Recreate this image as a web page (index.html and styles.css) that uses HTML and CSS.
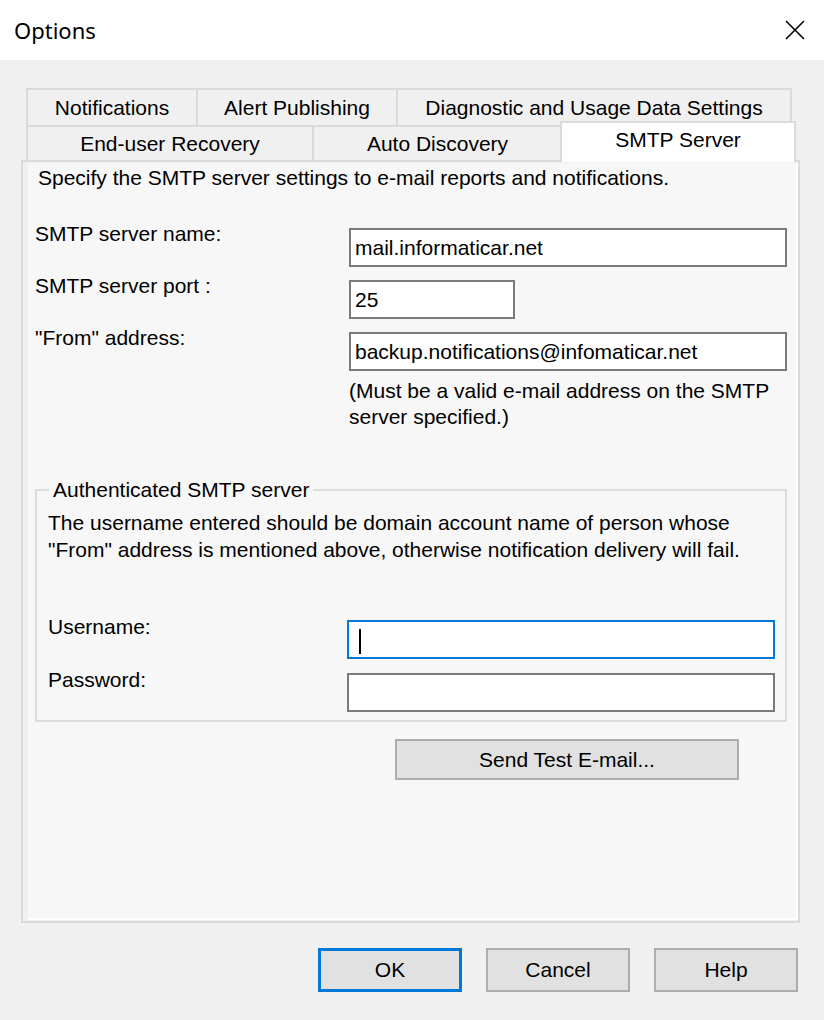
FILE: index.html
```html
<!DOCTYPE html>
<html>
<head>
<meta charset="utf-8">
<title>Options</title>
<link rel="stylesheet" href="styles.css">
</head>
<body>
<div class="titlebar">
  <span class="title">Options</span>
  <svg class="close" viewBox="0 0 20 20" width="20" height="20"><path d="M1 1L19 19M19 1L1 19" stroke="#000" stroke-width="1.6" fill="none"/></svg>
</div>
<div class="client">
  <div class="tabs">
    <div class="tabrow back">
      <div class="tab t-notif">Notifications</div>
      <div class="tab t-alert">Alert Publishing</div>
      <div class="tab t-diag">Diagnostic and Usage Data Settings</div>
    </div>
    <div class="tabrow front">
      <div class="tab t-end">End-user Recovery</div>
      <div class="tab t-auto">Auto Discovery</div>
      <div class="tab t-smtp selected">SMTP Server</div>
    </div>
  </div>
  <div class="panel">
    <div class="page">
      <div class="intro">Specify the SMTP server settings to e-mail reports and notifications.</div>
      <div class="form">
        <div class="label">SMTP server name:</div>
        <div class="tb wide">mail.informaticar.net</div>
        <div class="label">SMTP server port :</div>
        <div class="tb port">25</div>
        <div class="label">"From" address:</div>
        <div class="tb wide">backup.notifications@infomaticar.net</div>
        <div class="note">(Must be a valid e-mail address on the SMTP<br>server specified.)</div>
      </div>
      <fieldset class="group">
        <legend>Authenticated SMTP server</legend>
        <div class="group-text">The username entered should be domain account name of person whose<br>"From" address is mentioned above, otherwise notification delivery will fail.</div>
        <div class="auth">
          <div class="label">Username:</div>
          <div class="tb auth-tb focus"><span class="caret"></span></div>
          <div class="label">Password:</div>
          <div class="tb auth-tb"></div>
        </div>
      </fieldset>
      <div class="btn send">Send Test E-mail...</div>
    </div>
  </div>
  <div class="actions">
    <div class="btn act default">OK</div>
    <div class="btn act">Cancel</div>
    <div class="btn act">Help</div>
  </div>
</div>
</body>
</html>
```
FILE: styles.css
```css
* { box-sizing: border-box; }
html, body { margin: 0; padding: 0; }
body {
  width: 824px;
  height: 1020px;
  overflow: hidden;
  background: #f0f0f0;
  font-family: "Liberation Sans", Arial, sans-serif;
  font-size: 21px;
  color: #000;
}
.titlebar {
  height: 60px;
  background: #fff;
  display: flex;
  align-items: center;
  justify-content: space-between;
  padding: 0 19px 0 14px;
}
.title {
  font-family: "Noto Sans", "Open Sans", sans-serif;
  font-size: 22px;
}
.close { display: block; }
.client { padding-top: 28px; }
.tabs { margin-left: 26px; }
.tabrow { display: flex; align-items: flex-end; }
.tab {
  border: 2px solid #dadada;
  border-bottom: none;
  background: #f0f0f0;
  text-align: center;
  white-space: nowrap;
  margin-right: -2px;
}
.back .tab { height: 37px; line-height: 35px; }
.front { margin-top: -4px; }
.front .tab { height: 35px; line-height: 33px; }
.front .tab.selected {
  position: relative;
  z-index: 2;
  height: 41px;
  margin-bottom: -2px;
  margin-left: -1px;
  background: #fff;
  line-height: 34px;
  padding-bottom: 5px;
}
.t-notif { width: 172px; }
.t-alert { width: 202px; }
.t-diag { width: 396px; }
.t-end { width: 288px; }
.t-auto { width: 251px; }
.t-smtp { width: 236px; }
.panel {
  margin-left: 21px;
  width: 779px;
  height: 763px;
  border: 2px solid #dadada;
  background: #f0f0f0;
  padding: 1px 0 1px 5px;
}
.page {
  height: 100%;
  background: #f7f7f7;
  border-right: 2px solid #fff;
  border-bottom: 2px solid #fff;
  padding-top: 2px;
}
.intro { padding-left: 10px; line-height: 26px; }
.form {
  display: grid;
  grid-template-columns: 314px auto;
  row-gap: 13px;
  margin-top: 37px;
  padding-left: 7px;
  align-items: start;
}
.label { line-height: 26px; margin-top: -7px; white-space: nowrap; }
.tb {
  height: 39px;
  border: 2px solid #7a7a7a;
  background: #fff;
  padding: 0 4px;
  line-height: 35px;
  white-space: nowrap;
}
.tb.wide { width: 438px; }
.tb.port { width: 166px; }
.note { grid-column: 2; margin-top: -6px; line-height: 26px; }
.group {
  margin: 47px 9px 0 7px;
  min-width: 0;
  border: 2px solid #dcdcdc;
  padding: 0 11px 8px 11px;
}
.group legend {
  padding: 0 4px;
  margin-left: 1px;
  line-height: 26px;
}
.group-text { margin-top: 6px; line-height: 27px; }
.auth {
  display: grid;
  grid-template-columns: 299px 428px;
  row-gap: 14px;
  margin-top: 57px;
  align-items: start;
}
.auth .label { margin-top: -6px; }
.auth-tb { width: 428px; }
.tb.focus { border-color: #0078d7; padding-left: 10px; }
.caret {
  display: inline-block;
  width: 2px;
  height: 25px;
  background: #000;
  vertical-align: middle;
}
.btn {
  background: #e1e1e1;
  border: 2px solid #adadad;
  text-align: center;
  white-space: nowrap;
}
.send {
  width: 344px;
  height: 41px;
  line-height: 37px;
  margin: 17px 0 0 367px;
}
.actions {
  display: flex;
  justify-content: flex-end;
  gap: 24px;
  padding-right: 26px;
  margin-top: 25px;
}
.act { width: 144px; height: 44px; line-height: 40px; }
.act.default { border: 3px solid #0078d7; line-height: 38px; }
```
